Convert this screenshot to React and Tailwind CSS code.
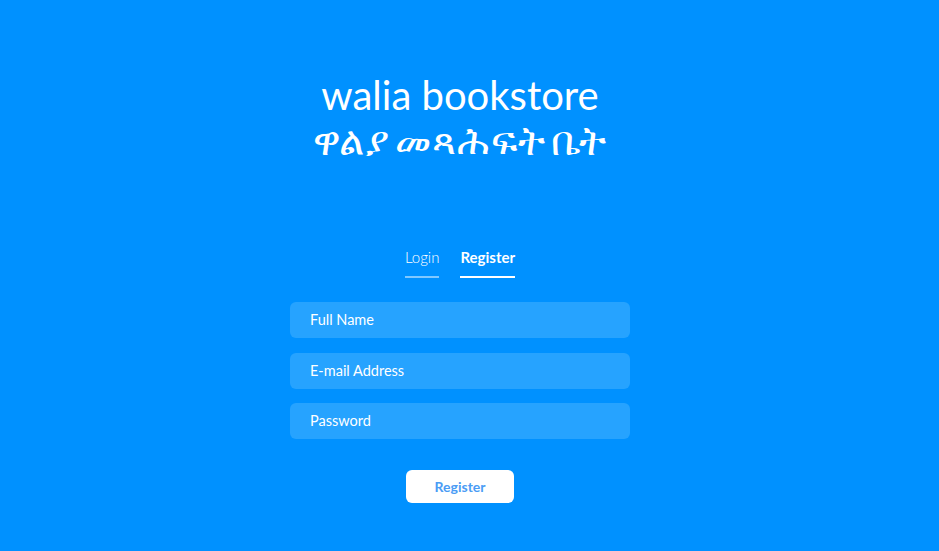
export default function App() {
  return (
    <div className="min-h-[551px] w-full bg-[#0091ff]">
      <div className="w-[920px] flex flex-col items-center text-white" style={{ fontFamily: 'Lato, "Noto Sans", "DejaVu Sans", sans-serif' }}>
        <div className="mt-[72px] flex flex-col items-center">
          <h1 className="text-[40px] leading-[46px] font-normal">walia bookstore</h1>
          <h2 className="text-[40px] leading-[44px] font-normal tracking-[1px] [word-spacing:-6px]">ዋልያ መጻሕፍት ቤት</h2>
        </div>
        <div className="mt-[85px] flex gap-[21px] text-[15px]">
          <div className="flex flex-col">
            <span className="leading-[20px] font-light">Login</span>
            <span className="mt-[9px] h-[2px] bg-white/50"></span>
          </div>
          <div className="flex flex-col">
            <span className="leading-[20px] font-bold">Register</span>
            <span className="mt-[9px] h-[2px] bg-white"></span>
          </div>
        </div>
        <div className="mt-[24px] w-[340px] flex flex-col">
          <div className="h-[36px] rounded-[6px] bg-[#26a3ff] pl-[20px] flex items-center text-[14.5px]">Full Name</div>
          <div className="mt-[15px] h-[36px] rounded-[6px] bg-[#26a3ff] pl-[20px] flex items-center text-[14.5px]">E-mail Address</div>
          <div className="mt-[14px] h-[36px] rounded-[6px] bg-[#26a3ff] pl-[20px] flex items-center text-[14.5px]">Password</div>
        </div>
        <button className="mt-[31px] w-[108px] h-[33px] rounded-[6px] bg-white text-[#4a9cf5] text-[14px] font-bold">Register</button>
      </div>
    </div>
  );
}
